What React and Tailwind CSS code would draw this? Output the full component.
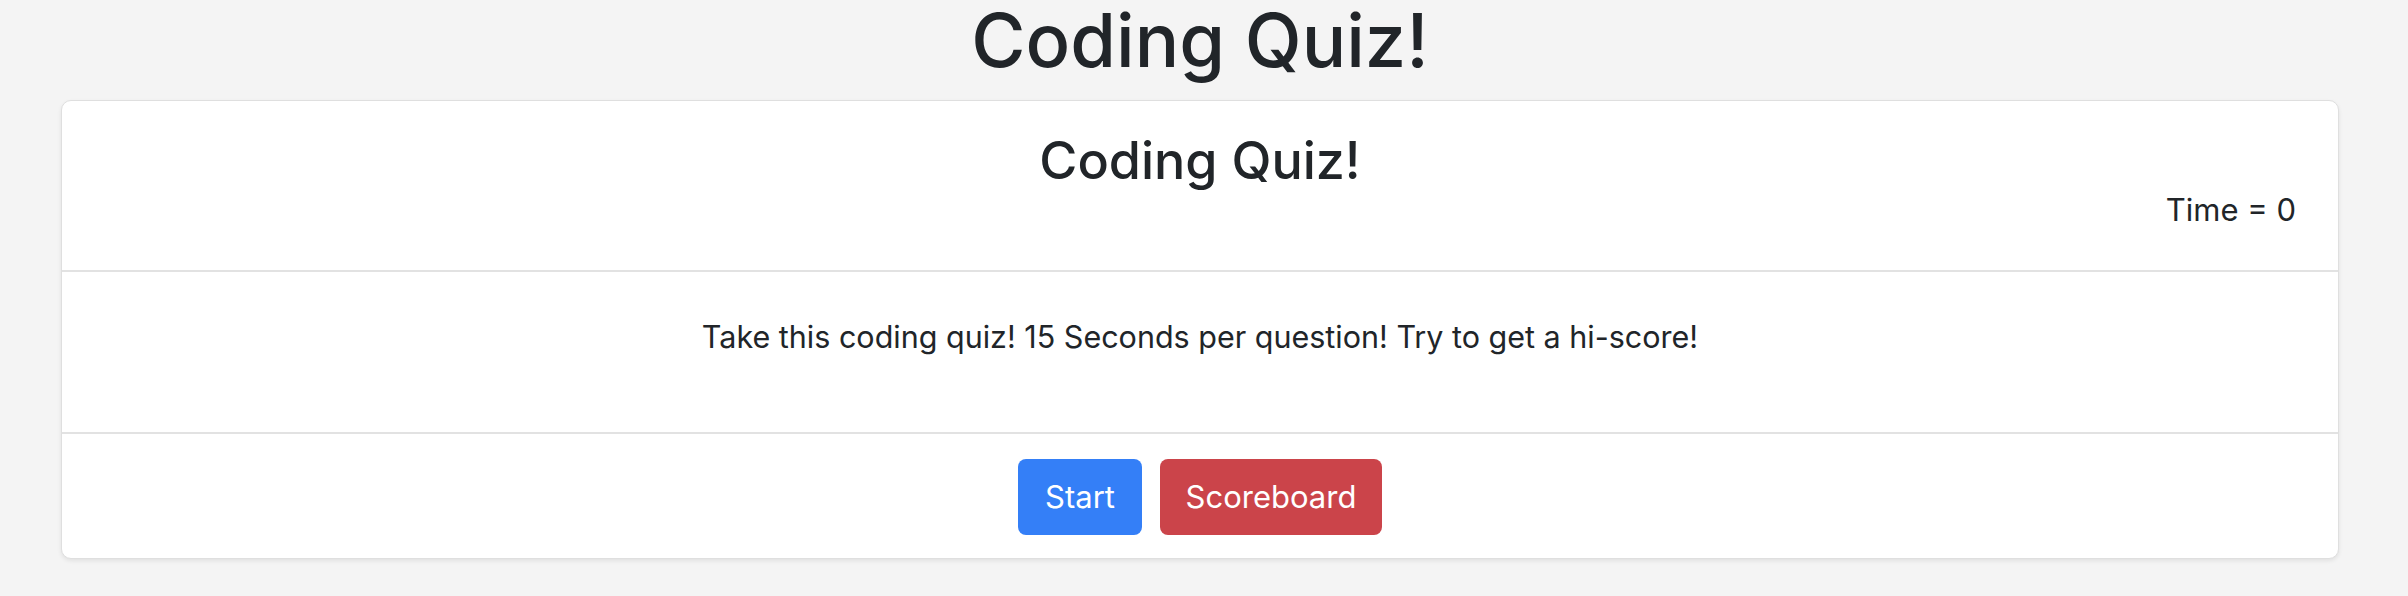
export default function App() {
  return (
    <div className="min-h-[596px] bg-[#f4f4f4] text-[#212529] font-['Inter','Liberation_Sans',sans-serif]">
      <div className="ml-[61px] mr-[69px]">
        {/* page title */}
        <h1 className="text-center text-[74px] leading-[80px] font-medium mb-[20px]">Coding Quiz!</h1>

        <div className="bg-white border border-[#dfdfdf] rounded-[10px] shadow-[0_2px_4px_rgba(0,0,0,0.08)]">
          {/* header */}
          <div className="h-[171px] border-b-2 border-[#e2e2e2] pt-[29px] px-[42px]">
            <h2 className="text-center text-[52px] leading-[62px] font-medium">Coding Quiz!</h2>
            <div className="text-right text-[31px] leading-[40px] -mt-[2px]">Time = 0</div>
          </div>

          {/* body */}
          <div className="h-[162px] border-b-2 border-[#e2e2e2] pt-[43px] text-center">
            <p className="text-[30.5px] leading-[43px]">
              Take this coding quiz! 15 Seconds per question! Try to get a hi-score!
            </p>
          </div>

          {/* footer */}
          <div className="pt-[25px] pb-[23px] flex justify-center gap-[18px]">
            <button className="w-[124px] h-[76px] rounded-[8px] bg-[#347ff7] text-white text-[31px]">Start</button>
            <button className="w-[222px] h-[76px] rounded-[8px] bg-[#cb444a] text-white text-[31px]">Scoreboard</button>
          </div>
        </div>
      </div>
    </div>
  );
}
